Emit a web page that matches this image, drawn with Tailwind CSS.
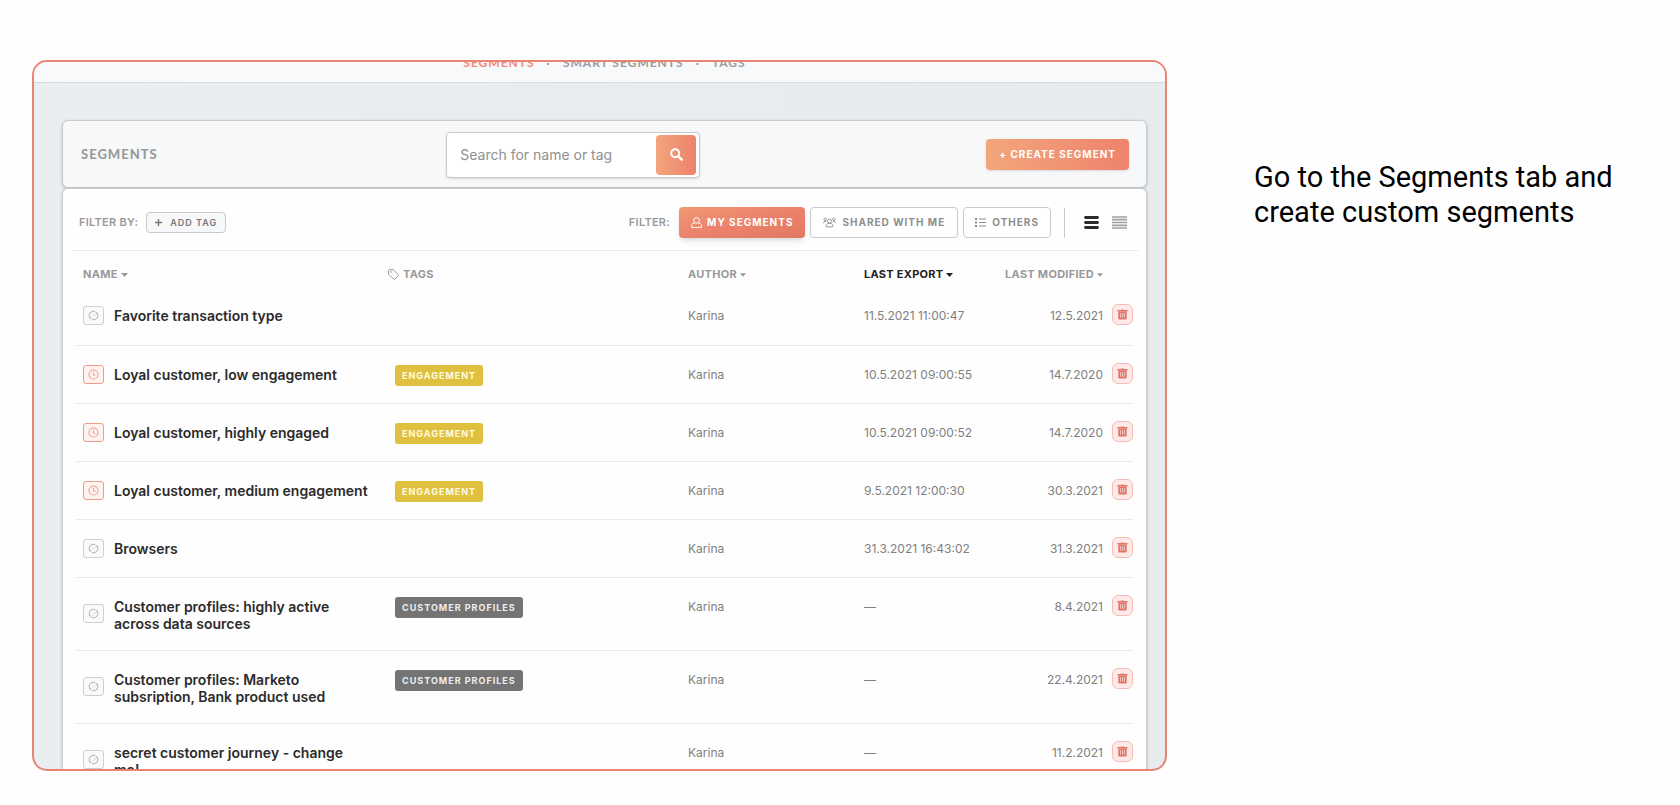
<!DOCTYPE html>
<html lang="en">
<head>
<meta charset="utf-8">
<title>Segments</title>
<script src="https://cdn.jsdelivr.net/npm/@tailwindcss/browser@4"></script>
</head>
<body class="bg-[#fefefe] font-['Inter',sans-serif]">
<svg class="hidden" aria-hidden="true">
  <symbol id="refresh" viewBox="0 0 12 12"><path fill="none" stroke="currentColor" stroke-width="1.100" d="M2.300 8.900A4.700 4.700 0 0 1 7.800 1.700M9.700 3.100A4.700 4.700 0 0 1 4.200 10.300"/><path fill="currentColor" d="M1.600 6.600L4.400 9.400 1.800 9.800zM10.400 5.400L7.600 2.600 10.200 2.200z" opacity=".7"/><path fill="none" stroke="currentColor" stroke-width=".9" d="M6.300 4.300l2 2M5 6.600l1.800 1.600" opacity=".6"/></symbol>
  <symbol id="clock" viewBox="0 0 12 12"><g fill="none" stroke="currentColor" stroke-width="1.100"><circle cx="6" cy="6" r="5"/><path d="M6 3V6.300L8 7.500"/></g></symbol>
  <symbol id="trash" viewBox="0 0 12 12"><path fill="currentColor" d="M4.200 1.200C4.200.8 4.500.5 4.900.5h2.200c.4 0 .7.300.7.700h3.700v1.400H.5V1.200zM1.400 3h9.200v7.300c0 .7-.5 1.200-1.200 1.200H2.600c-.7 0-1.200-.5-1.200-1.200z"/><path stroke="#fbe3e0" stroke-width=".8" d="M3.900 4.500v5M6 4.500v5M8.100 4.500v5"/></symbol>
</svg>
<div class="flex h-screen overflow-hidden pt-[60px] pb-[34px] pl-8">
  <main class="min-w-0 flex-1 overflow-hidden rounded-[15px] border-2 border-[#ea8370] bg-linear-to-r from-[#ebeef1] to-[#e7ebee]">
    <nav class="flex h-[21px] items-end justify-center gap-3 overflow-hidden border-b border-[#d9dcdf] bg-[#f8f9fa] pb-[13px] pl-[10px] font-['Lato',sans-serif] text-xs leading-none font-bold tracking-[1px] text-[#9b9b9b]">
      <a href="#" class="text-[#f08a78]">SEGMENTS</a><span>·</span>
      <a href="#">SMART SEGMENTS</a><span>·</span>
      <a href="#">TAGS</a>
    </nav>
    <div class="pt-[37px] pr-[18px] pl-7">
      <header class="grid h-[68px] grid-cols-[46fr_254px_54fr] items-center rounded-md border border-[#c9cbcd] bg-[#f6f8f9] pt-px pr-[17px] pl-[18px] shadow-[0_1px_3px_rgba(0,0,0,0.22)]">
        <h1 class="font-['Lato',sans-serif] text-[13px] font-black tracking-[1px] text-[#9b9b9b]">SEGMENTS</h1>
        <form class="flex h-[46px] items-center rounded border border-[#c9c9c9] bg-white pr-[3px] pl-[13px] shadow-sm">
          <input aria-label="Search for name or tag" placeholder="Search for name or tag" class="min-w-0 flex-1 text-sm outline-none placeholder:text-[#909090]">
          <button type="button" aria-label="Search" class="flex size-10 items-center justify-center rounded bg-linear-to-r from-[#f2a57c] to-[#ed826c] text-white">
            <svg class="size-[13px]" viewBox="0 0 13 13"><g fill="none" stroke="currentColor" stroke-linecap="round"><circle cx="5.200" cy="5.200" r="4" stroke-width="2"/><path d="M8.500 8.500l3.200 3.200" stroke-width="2.400"/></g></svg>
          </button>
        </form>
        <button class="h-[31px] justify-self-end rounded bg-linear-to-r from-[#f3a67c] to-[#ee836d] px-[13px] text-[10px] font-bold tracking-[1px] text-white shadow-sm">+ CREATE SEGMENT</button>
      </header>
      <section class="rounded-md border border-[#c9cbcd] bg-[#fefefe] px-2 shadow-[0_1px_3px_rgba(0,0,0,0.22)]">
        <div class="flex h-[62px] items-center border-b border-[#e9e9e9] pt-[6px] pr-[11px] pl-2 text-[11px] font-semibold tracking-wide text-[#999]">
          <span class="mr-2">FILTER BY:</span>
          <button class="flex h-[21px] items-center gap-2 rounded border border-[#c9c9c9] bg-[#f7f8f9] px-2 text-[9px] font-semibold tracking-[1px] text-[#777]">
            <svg class="size-[7px]" viewBox="0 0 7 7"><path d="M3.500 0v7M0 3.500h7" stroke="currentColor" stroke-width="1.400"/></svg>ADD TAG</button>
          <span class="mr-[9px] ml-auto">FILTER:</span>
          <button class="mr-[5px] flex h-[31px] items-center gap-[5px] rounded bg-linear-to-br from-[#f09873] via-[#ec826c] to-[#e27860] px-[12px] text-[10px] font-bold tracking-[1px] text-white shadow-md">
            <svg class="size-[11px]" viewBox="0 0 11 11" fill="none" stroke="currentColor"><circle cx="5.500" cy="3.400" r="2.800"/><path d="M3.600 6.200H2.900C1.500 6.200.6 7.200.6 8.600v1.800h9.800V8.600c0-1.400-.9-2.400-2.300-2.400h-.7"/></svg>MY SEGMENTS</button>
          <button class="mr-[5px] flex h-[31px] items-center gap-[6px] rounded border border-[#c9c9c9] bg-white px-[12px] text-[10px] font-bold tracking-[1px] text-[#8e8e8e]">
            <svg class="h-[11px] w-[13px]" viewBox="0 0 13 11" fill="none" stroke="currentColor" stroke-width=".9"><circle cx="6.500" cy="4.200" r="2"/><circle cx="2.200" cy="2.400" r="1.300"/><circle cx="10.800" cy="2.400" r="1.300"/><path d="M3.200 9.800V8.600c0-1 .7-1.800 1.800-2.200h3c1.100.4 1.800 1.200 1.800 2.200v1.200zM.5 6.200c0-1 .6-1.600 1.400-1.800h1.200M12.500 6.200c0-1-.6-1.600-1.400-1.800H9.900"/></svg>SHARED WITH ME</button>
          <button class="flex h-[31px] items-center gap-[6px] rounded border border-[#c9c9c9] bg-white px-[11px] text-[10px] font-bold tracking-[1px] text-[#8e8e8e]">
            <svg class="h-[9px] w-[11px]" viewBox="0 0 11 9" stroke="currentColor"><path d="M0 1h2M0 4.500h2M0 8h2" stroke-width="1.800"/><path d="M4 1h7M4 4.500h7M4 8h7"/></svg>OTHERS</button>
          <span class="mr-[19px] ml-[13px] h-[30px] w-px bg-[#c9c9c9]"></span>
          <button aria-label="Comfortable rows" class="mr-[13px] text-[#2b2b2b]"><svg class="h-[13px] w-[15px]" viewBox="0 0 15 13"><path d="M1.500 1.500h12M1.500 6.500h12M1.500 11.500h12" stroke="currentColor" stroke-width="2.800" stroke-linecap="round"/></svg></button>
          <button aria-label="Compact rows" class="text-[#a0a0a0]"><svg class="h-[13px] w-[15px]" viewBox="0 0 15 13"><path d="M0 1h15M0 3.700h15M0 6.500h15M0 9.300h15M0 12h15" stroke="currentColor" stroke-width="1.700"/></svg></button>
        </div>
        <div class="px-[5px]">
        <table class="w-full table-fixed text-left text-xs leading-[17px] text-[#808080]">
          <colgroup><col class="w-[38px]"><col class="w-[274px]"><col><col class="w-[176px]"><col class="w-[126px]"><col class="w-[113px]"><col class="w-[30px]"></colgroup>
          <thead class="text-[11px] tracking-wide text-[#999]">
            <tr class="h-9">
              <th colspan="2" class="pt-[11px] pl-[7px] font-bold"><button class="flex items-center gap-[3px]">NAME <svg class="h-1 w-[7px]" viewBox="0 0 7 4"><path d="M0 0h7L3.500 4z" fill="currentColor"/></svg></button></th>
              <th class="pt-[11px] font-bold"><span class="flex items-center gap-1"><svg class="size-[11px]" viewBox="0 0 11 11" fill="none" stroke="currentColor"><path d="M.6 1.600c0-.6.4-1 1-1h3.600l5 5c.4.4.4.9 0 1.300l-3.300 3.300c-.4.4-.9.4-1.300 0l-5-5z"/><circle cx="3" cy="3" r=".4"/></svg>TAGS</span></th>
              <th class="pt-[11px] font-bold"><button class="flex items-center gap-[3px]">AUTHOR <svg class="h-1 w-[6px]" viewBox="0 0 7 4"><path d="M0 0h7L3.500 4z" fill="currentColor"/></svg></button></th>
              <th class="pt-[11px] font-bold text-[#222]"><button class="flex items-center gap-[3px]">LAST EXPORT <svg class="h-1 w-[7px]" viewBox="0 0 7 4"><path d="M0 0h7L3.500 4z" fill="currentColor"/></svg></button></th>
              <th class="pt-[11px] font-bold"><button class="ml-auto flex items-center gap-[3px] whitespace-nowrap">LAST MODIFIED <svg class="h-1 w-[6px]" viewBox="0 0 7 4"><path d="M0 0h7L3.500 4z" fill="currentColor"/></svg></button></th>
              <th></th>
            </tr>
          </thead>
          <tbody id="rows"></tbody>
        </table>
        </div>
      </section>
    </div>
  </main>
  <aside class="w-[513px] pt-[100px] pr-8 pl-[87px] font-['Roboto',sans-serif] text-[29px] leading-[35px] text-black">
    <p>Go to the Segments tab and create custom segments</p>
  </aside>
</div>
<script>
const E = '<span class="inline-flex h-[21px] items-center rounded-[3px] bg-[#dfc13f] px-[7px] text-[9px] font-bold tracking-[1px] text-[#fffbe0]">ENGAGEMENT</span>';
const C = '<span class="inline-flex h-[21px] items-center rounded-[3px] bg-[#747474] px-[7px] text-[9px] font-bold tracking-[1px] text-[#eee]">CUSTOMER PROFILES</span>';
const rows = [
  [0, 'Favorite transaction type', '', '11.5.2021 11:00:47', '12.5.2021'],
  [1, 'Loyal customer, low engagement', E, '10.5.2021 09:00:55', '14.7.2020'],
  [1, 'Loyal customer, highly engaged', E, '10.5.2021 09:00:52', '14.7.2020'],
  [1, 'Loyal customer, medium engagement', E, '9.5.2021 12:00:30', '30.3.2021'],
  [0, 'Browsers', '', '31.3.2021 16:43:02', '31.3.2021'],
  [0, 'Customer profiles: highly active across data sources', C, '—', '8.4.2021'],
  [0, 'Customer profiles: Marketo subsription, Bank product used', C, '—', '22.4.2021'],
  [0, 'secret customer journey - change me!', '', '—', '11.2.2021'],
];
const icon = [
  '<span class="flex h-[19px] w-[21px] items-center justify-center rounded-[3px] border border-[#cfcfcf] bg-[#fafafa] text-[#b5b5b5]"><svg class="size-[11px]"><use href="#refresh"/></svg></span>',
  '<span class="flex h-[19px] w-[21px] items-center justify-center rounded-[3px] border border-[#f29c8b] bg-[#fff3f0] text-[#f29c8b]"><svg class="size-[11px]"><use href="#clock"/></svg></span>'
];
document.getElementById('rows').innerHTML = rows.map(r => `<tr class="h-[58px] border-b border-[#e9e9e9] align-top">
  <td class="pl-[7px] align-middle">${icon[r[0]]}</td>
  <td class="pt-5 pr-[18px] pb-[18px] text-sm leading-[17px] font-semibold text-[#2b2b2b]">${r[1]}</td>
  <td class="pt-[19px] pl-[7px]">${r[2]}</td>
  <td class="pt-5">Karina</td>
  <td class="pt-5 whitespace-nowrap">${r[3]}</td>
  <td class="pt-5 text-right">${r[4]}</td>
  <td class="pt-[17px]"><button aria-label="Delete segment" class="ml-auto flex size-[21px] items-center justify-center rounded-md border border-[#f5bdb6] bg-[#fdeae8] text-[#e37566]"><svg class="size-[11px]"><use href="#trash"/></svg></button></td>
</tr>`).join('');
</script>
</body>
</html>
